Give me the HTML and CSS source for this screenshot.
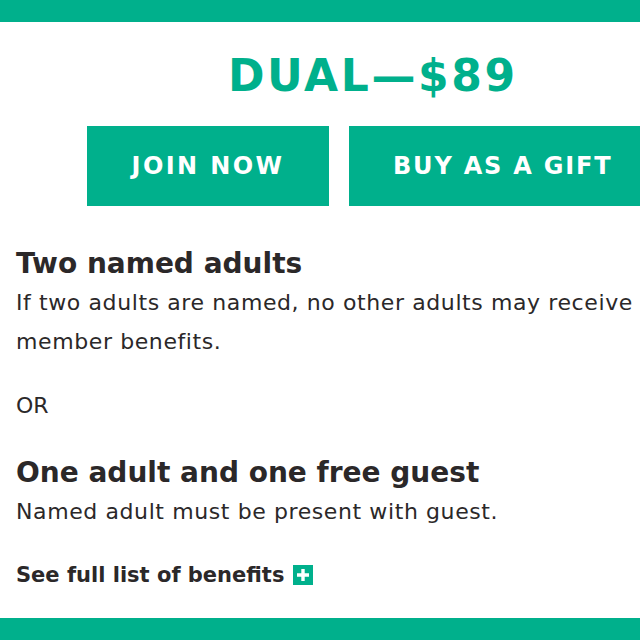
FILE: index.html
```html
<!DOCTYPE html>
<html>
<head>
<meta charset="utf-8">
<link rel="stylesheet" href="styles.css">
</head>
<body>
<div class="bar"></div>
<div class="card">
  <h1 class="price">DUAL—$89</h1>
  <div class="actions">
    <a class="btn btn-join">JOIN NOW</a>
    <a class="btn btn-gift">BUY AS A GIFT</a>
  </div>
  <div class="info">
    <h2 class="opt-title">Two named adults</h2>
    <p class="opt-text">If two adults are named, no other adults may receive member benefits.</p>
    <p class="or">OR</p>
    <h2 class="opt-title">One adult and one free guest</h2>
    <p class="opt-text">Named adult must be present with guest.</p>
    <a class="more">See full list of benefits <span class="plus"><svg viewBox="0 0 20 20" width="20" height="20"><rect width="20" height="20" fill="#00b08c"/><path d="M10 4v12M4 10h12" stroke="#fff" stroke-width="3.4"/></svg></span></a>
  </div>
</div>
<div class="bar bar-bottom"></div>
</body>
</html>
```
FILE: styles.css
```css
html, body {
  margin: 0;
  padding: 0;
  width: 640px;
  height: 640px;
  overflow: hidden;
  background: #fff;
}
body {
  font-family: "DejaVu Sans", "Open Sans", sans-serif;
  color: #2b2829;
  display: flex;
  flex-direction: column;
}
.bar {
  height: 22px;
  background: #00b08c;
  flex: none;
}
.card {
  flex: 1;
  display: flex;
  flex-direction: column;
}
.price {
  margin: 32px 0 0 228px;
  font-weight: 700;
  font-size: 44px;
  line-height: 44px;
  letter-spacing: 2.6px;
  color: #00b08c;
  white-space: nowrap;
}
.actions {
  display: flex;
  gap: 20px;
  margin: 28px 0 0 87px;
}
.btn {
  flex: none;
  width: 242px;
  height: 80px;
  background: #00b08c;
  color: #fff;
  display: flex;
  align-items: center;
  justify-content: center;
  font-weight: 700;
  font-size: 24px;
  letter-spacing: 2.4px;
}
.btn-gift {
  width: 300px;
  justify-content: flex-start;
  padding-left: 44px;
  box-sizing: border-box;
  letter-spacing: 1.8px;
}
.info {
  padding: 41px 0 0 16px;
}
.opt-title {
  margin: 0;
  font-weight: 700;
  font-size: 28px;
  line-height: 34px;
  white-space: nowrap;
}
.opt-text {
  margin: 2px 0 0;
  font-size: 22px;
  line-height: 39px;
  letter-spacing: 0.6px;
  width: 630px;
}
.or {
  margin: 32px 0 37px;
  font-size: 22px;
  line-height: 26px;
}
.more {
  display: flex;
  align-items: center;
  gap: 9px;
  margin-top: 31px;
  font-weight: 700;
  font-size: 21px;
  line-height: 26px;
}
.plus {
  display: flex;
}
.bar-bottom {
  height: 22px;
}
```
